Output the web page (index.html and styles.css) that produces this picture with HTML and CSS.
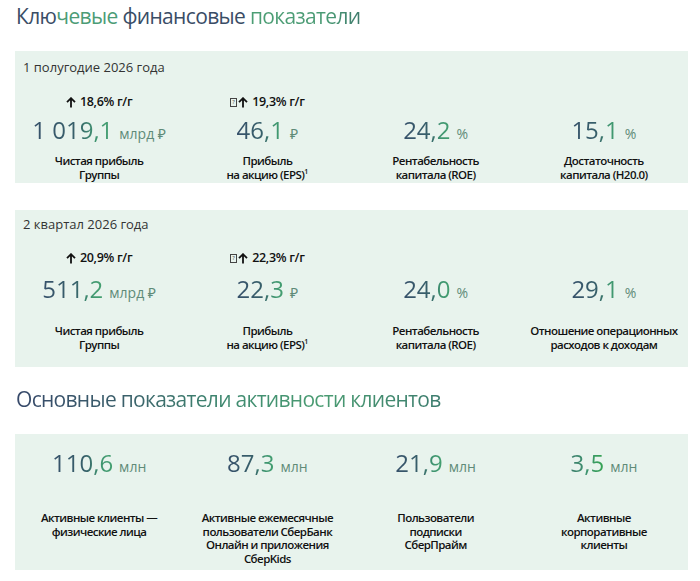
FILE: index.html
```html
<!DOCTYPE html>
<html lang="ru">
<head>
<meta charset="utf-8">
<title>Ключевые финансовые показатели</title>
<link rel="stylesheet" href="styles.css">
</head>
<body>
<h1 class="title"><span class="w-dark">Клю</span><span class="w-green">чевые</span> <span class="w-dark">финансовые</span> <span class="w-green2">показатели</span></h1>

<section class="panel panel-h1">
  <div class="panel-head">1 полугодие 2026 года</div>
  <div class="metrics">
    <div class="metric">
      <div class="growth"><svg class="arrow" viewBox="0 0 10 11" width="10" height="11"><path d="M5 10.5V1.2M1 5.2L5 1.2L9 5.2"/></svg>18,6% г/г</div>
      <div class="value"><span class="num">1 019,1</span><span class="unit">млрд ₽</span></div>
      <div class="label">Чистая прибыль<br>Группы</div>
    </div>
    <div class="metric">
      <div class="growth"><span class="tofu">?</span><svg class="arrow" viewBox="0 0 10 11" width="10" height="11"><path d="M5 10.5V1.2M1 5.2L5 1.2L9 5.2"/></svg>19,3% г/г</div>
      <div class="value"><span class="num">46,1</span><span class="unit">₽</span></div>
      <div class="label">Прибыль<br>на акцию (EPS)<sup>1</sup></div>
    </div>
    <div class="metric">
      <div class="growth"></div>
      <div class="value"><span class="num">24,2</span><span class="unit">%</span></div>
      <div class="label">Рентабельность<br>капитала (ROE)</div>
    </div>
    <div class="metric">
      <div class="growth"></div>
      <div class="value"><span class="num">15,1</span><span class="unit">%</span></div>
      <div class="label">Достаточность<br>капитала (Н20.0)</div>
    </div>
  </div>
</section>

<section class="panel panel-q2">
  <div class="panel-head">2 квартал 2026 года</div>
  <div class="metrics">
    <div class="metric">
      <div class="growth"><svg class="arrow" viewBox="0 0 10 11" width="10" height="11"><path d="M5 10.5V1.2M1 5.2L5 1.2L9 5.2"/></svg>20,9% г/г</div>
      <div class="value"><span class="num">511,2</span><span class="unit">млрд ₽</span></div>
      <div class="label">Чистая прибыль<br>Группы</div>
    </div>
    <div class="metric">
      <div class="growth"><span class="tofu">?</span><svg class="arrow" viewBox="0 0 10 11" width="10" height="11"><path d="M5 10.5V1.2M1 5.2L5 1.2L9 5.2"/></svg>22,3% г/г</div>
      <div class="value"><span class="num">22,3</span><span class="unit">₽</span></div>
      <div class="label">Прибыль<br>на акцию (EPS)<sup>1</sup></div>
    </div>
    <div class="metric">
      <div class="growth"></div>
      <div class="value"><span class="num">24,0</span><span class="unit">%</span></div>
      <div class="label">Рентабельность<br>капитала (ROE)</div>
    </div>
    <div class="metric">
      <div class="growth"></div>
      <div class="value"><span class="num">29,1</span><span class="unit">%</span></div>
      <div class="label">Отношение операционных<br>расходов к доходам</div>
    </div>
  </div>
</section>

<h1 class="title title-2"><span class="grad-title">Основные показатели активности клиентов</span></h1>

<section class="panel panel-clients">
  <div class="metrics">
    <div class="metric">
      <div class="value"><span class="num">110,6</span><span class="unit">млн</span></div>
      <div class="label">Активные клиенты —<br>физические лица</div>
    </div>
    <div class="metric">
      <div class="value"><span class="num">87,3</span><span class="unit">млн</span></div>
      <div class="label">Активные ежемесячные<br>пользователи СберБанк<br>Онлайн и приложения<br>СберKids</div>
    </div>
    <div class="metric">
      <div class="value"><span class="num">21,9</span><span class="unit">млн</span></div>
      <div class="label">Пользователи<br>подписки<br>СберПрайм</div>
    </div>
    <div class="metric">
      <div class="value"><span class="num num-green">3,5</span><span class="unit">млн</span></div>
      <div class="label">Активные<br>корпоративные<br>клиенты</div>
    </div>
  </div>
</section>
</body>
</html>
```

FILE: styles.css
```css
* { box-sizing: border-box; }

html, body {
  margin: 0;
  padding: 0;
  background: #ffffff;
}

body {
  width: 700px;
  padding-top: 2px;
  font-family: "Open Sans", "Noto Sans", "DejaVu Sans", sans-serif;
  color: #1a1a1a;
}

.title {
  margin: 0;
  padding-left: 16px;
  font-size: 21px;
  line-height: 28px;
  font-weight: 400;
  letter-spacing: -0.65px;
}

.w-dark { color: #3a4d66; }
.w-green { color: #4c9c76; }
.w-green2 {
  background: linear-gradient(90deg, #4c9e74 0%, #4a9a74 70%, #3e7a6c 100%);
  -webkit-background-clip: text;
  background-clip: text;
  color: transparent;
}

.grad-title {
  background: linear-gradient(90deg, #37496a 0%, #3a5f6a 25%, #3f8a70 50%, #4a9c72 72%, #3d7c6e 100%);
  -webkit-background-clip: text;
  background-clip: text;
  color: transparent;
}

.title-2 {
  margin-top: 18px;
  letter-spacing: -0.7px;
}

.panel {
  margin: 21px 12px 0 15px;
  background: #e8f3ed;
}

.panel-head {
  padding-left: 8px;
  font-size: 13px;
  line-height: 16px;
  color: #333333;
}

.metrics {
  display: grid;
  grid-template-columns: repeat(4, 1fr);
}

.metric {
  display: flex;
  flex-direction: column;
  align-items: center;
  text-align: center;
}

.growth {
  display: flex;
  align-items: center;
  justify-content: center;
  height: 16px;
  font-size: 12.5px;
  line-height: 16px;
  letter-spacing: -0.3px;
  color: #111111;
  font-weight: 600;
}

.arrow {
  margin-right: 4px;
  fill: none;
  stroke: #111111;
  stroke-width: 1.8;
}

.tofu {
  display: inline-block;
  width: 7px;
  height: 9px;
  margin-right: 1px;
  border: 1px solid #444;
  font-size: 6px;
  line-height: 7px;
  text-align: center;
  color: #444;
  font-weight: 400;
  letter-spacing: 0;
}

.value {
  height: 30px;
  font-size: 24px;
  line-height: 30px;
  white-space: nowrap;
}

.num {
  background: linear-gradient(90deg, #36506a 0%, #37606a 55%, #3f9470 78%, #44a070 100%);
  -webkit-background-clip: text;
  background-clip: text;
  color: transparent;
}

.num-green {
  background: linear-gradient(90deg, #3a7c6a 0%, #3f9470 50%, #33a350 100%);
  -webkit-background-clip: text;
  background-clip: text;
  color: transparent;
}

.unit {
  margin-left: 6px;
  font-size: 14px;
  color: #5f8b78;
}

.label {
  font-size: 11.5px;
  line-height: 14px;
  letter-spacing: -0.55px;
  color: #111111;
  font-weight: 600;
}

.label sup {
  font-size: 7px;
  line-height: 0;
  vertical-align: 5px;
  letter-spacing: 0;
}

/* panel 1 spacing */
.panel-h1 { padding: 8px 0 1px; }
.panel-h1 .growth { margin-top: 19px; }
.panel-h1 .value { margin-top: 5px; }
.panel-h1 .label { margin-top: 9px; }

/* panel 2 spacing */
.panel-q2 { margin-top: 27px; padding: 6px 0 15px; }
.panel-q2 .growth { margin-top: 18px; }
.panel-q2 .value { margin-top: 8px; }
.panel-q2 .label { margin-top: 20px; }

/* clients panel */
.panel-clients { margin-top: 21px; padding: 14px 0 5px; }
.panel-clients .label {
  margin-top: 33px;
  line-height: 13.5px;
}
```
